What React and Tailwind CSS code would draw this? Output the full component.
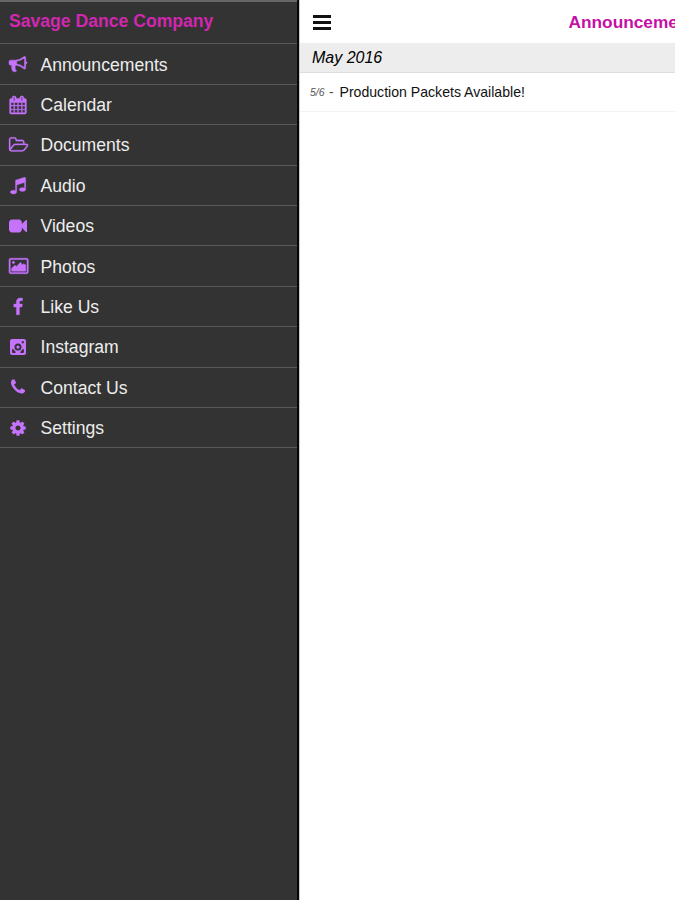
const menuItems = [
  {
    label: 'Announcements',
    weight: 50,
    path: 'M1664 640q53 0 90.5 37.5t37.5 90.5-37.5 90.5-90.5 37.5v384q0 52-38 90t-90 38q-417-347-812-380-58 19-91 66t-31 100.5 40 92.5q-20 33-23 65.5t6 58 33.5 55 48 50 61.5 50.5q-29 58-111.5 83t-168.5 11.5-132-55.5q-7-23-29.5-87.5t-32-94.5-23-89-15-101 3.5-98.5 22-110.5h-122q-66 0-113-47t-47-113v-192q0-66 47-113t113-47h480q435 0 896-384 52 0 90 38t38 90v384zm-128 604v-954q-394 302-768 343v270q377 42 768 341z',
  },
  {
    label: 'Calendar',
    weight: 50,
    path: 'M192 1664h288v-288h-288v288zm352 0h320v-288h-320v288zm-352-352h288v-320h-288v320zm352 0h320v-320h-320v320zm-352-384h288v-288h-288v288zm736 736h320v-288h-320v288zm-384-736h320v-288h-320v288zm768 736h288v-288h-288v288zm-384-352h320v-320h-320v320zm-352-864v-288q0-13-9.5-22.5t-22.5-9.5h-64q-13 0-22.5 9.5t-9.5 22.5v288q0 13 9.5 22.5t22.5 9.5h64q13 0 22.5-9.5t9.5-22.5zm736 864h288v-320h-288v320zm-384-384h320v-288h-320v288zm384 0h288v-288h-288v288zm32-480v-288q0-13-9.5-22.5t-22.5-9.5h-64q-13 0-22.5 9.5t-9.5 22.5v288q0 13 9.5 22.5t22.5 9.5h64q13 0 22.5-9.5t9.5-22.5zm384-64v1280q0 52-38 90t-90 38h-1408q-52 0-90-38t-38-90v-1280q0-52 38-90t90-38h128v-96q0-66 47-113t113-47h64q66 0 113 47t47 113v96h384v-96q0-66 47-113t113-47h64q66 0 113 47t47 113v96h128q52 0 90 38t38 90z',
  },
  {
    label: 'Documents',
    viewBox: '64 0 1920 1792',
    weight: 30,
    path: 'M1845 931q0-35-53-35h-1088q-40 0-85.5 21.5t-71.5 52.5l-294 363q-18 24-18 40 0 35 53 35h1088q40 0 86-22t71-53l294-363q18-22 18-39zm-1141-163h768v-160q0-40-28-68t-68-28h-576q-40 0-68-28t-28-68v-64q0-40-28-68t-68-28h-320q-40 0-68 28t-28 68v853l256-315q44-53 116-87.5t140-34.5zm1269 163q0 62-46 120l-295 363q-43 53-116 87.5t-140 34.5h-1088q-92 0-158-66t-66-158v-960q0-92 66-158t158-66h320q92 0 158 66t66 158v32h544q92 0 158 66t66 158v160h192q54 0 99 24.5t67 70.5q15 32 15 68z',
  },
  {
    label: 'Audio',
    weight: 30,
    path: 'M1664 224v1120q0 50-34 89t-86 60.5-103.5 32-96.5 10.5-96.5-10.5-103.5-32-86-60.5-34-89 34-89 86-60.5 103.5-32 96.5-10.5q105 0 192 39v-537l-768 237v709q0 50-34 89t-86 60.5-103.5 32-96.5 10.5-96.5-10.5-103.5-32-86-60.5-34-89 34-89 86-60.5 103.5-32 96.5-10.5q105 0 192 39v-967q0-31 19-56.5t49-35.5l832-256q12-4 28-4 40 0 68 28t28 68z',
  },
  {
    label: 'Videos',
    path: 'M1792 352v1088q0 42-39 59-13 5-25 5-27 0-45-19l-403-403v166q0 119-84.5 203.5t-203.5 84.5h-704q-119 0-203.5-84.5t-84.5-203.5v-704q0-119 84.5-203.5t203.5-84.5h704q119 0 203.5 84.5t84.5 203.5v165l403-402q18-19 45-19 12 0 25 5 39 17 39 59z',
  },
  {
    label: 'Photos',
    viewBox: '-64 0 1920 1792',
    weight: 50,
    path: 'M500 540q0 50-35 85t-85 35-85-35-35-85 35-85 85-35 85 35 35 85zm1100 260v608h-1408v-272l320-320 160 120 412-412 180 276 130-120zm96-544h-1600q-13 0-22.5 9.5t-9.5 22.5v1216q0 13 9.5 22.5t22.5 9.5h1600q13 0 22.5-9.5t9.5-22.5v-1216q0-13-9.5-22.5t-22.5-9.5zm160 32v1216q0 66-47 113t-113 47h-1600q-66 0-113-47t-47-113v-1216q0-66 47-113t113-47h1600q66 0 113 47t47 113z',
  },
  {
    label: 'Like Us',
    weight: 40,
    path: 'M1343 12v264h-157q-86 0-116 36t-30 108v189h293l-39 296h-254v759h-306v-759h-255v-296h255v-218q0-186 104-288.5t277-102.5q147 0 228 12z',
  },
  {
    label: 'Instagram',
    // camera body, then the cut-outs: lens ring, flash and the two lower corners
    path: 'M300 100h1192a200 200 0 0 1 200 200v1192a200 200 0 0 1-200 200h-1192a200 200 0 0 1-200-200v-1192a200 200 0 0 1 200-200zM896 550a350 350 0 1 0 0 700 350 350 0 1 0 0-700zM896 740a160 160 0 1 1 0 320 160 160 0 1 1 0-320zM1270 320h210v210h-210zM310 1130h120l220 250v110h-280l-60-60zM1482 1130h-120l-220 250v110h280l60-60z',
  },
  {
    label: 'Contact Us',
    path: 'M1600 1240q0 27-10 70.5t-21 68.5q-21 50-122 106-94 51-186 51-27 0-53-3.5t-57.5-12.5-47-14.5-55.5-20.5-49-18q-98-35-175-83-127-79-264-216t-216-264q-48-77-83-175-3-9-18-49t-20.5-55.5-14.5-47-12.5-57.5-3.5-53q0-92 51-186 56-101 106-122 25-11 68.5-21t70.5-10q14 0 21 3 18 6 53 76 11 19 30 54t35 63.5 31 53.5q3 4 17.5 25t21.5 35.5 7 28.5q0 20-28.5 50t-62 55-62 53-28.5 46q0 9 5 22.5t8.5 20.5 14 24 11.5 19q76 137 174 235t235 174q2 1 19 11.5t24 14 20.5 8.5 22.5 5q18 0 46-28.5t53-62 55-62 50-28.5q14 0 28.5 7t35.5 21.5 25 17.5q25 15 53.5 31t63.5 35 54 30q70 35 76 53 3 7 3 21z',
  },
  {
    label: 'Settings',
    path: 'M1152 896q0-106-75-181t-181-75-181 75-75 181 75 181 181 75 181-75 75-181zm512-109v222q0 12-8 23t-20 13l-185 28q-19 54-39 91 35 50 107 138 10 12 10 25t-9 23q-27 37-99 108t-94 71q-12 0-26-9l-138-108q-44 23-91 38-16 136-29 186-7 28-36 28h-222q-14 0-24.5-8.5t-11.5-21.5l-28-184q-49-16-90-37l-141 107q-10 9-25 9-14 0-25-11-126-114-165-168-7-10-7-23 0-12 8-23 15-21 51-66.5t54-70.5q-27-50-41-99l-183-27q-13-2-21-12.5t-8-23.5v-222q0-12 8-23t19-13l186-28q14-46 39-92-40-57-107-138-10-12-10-24 0-10 9-23 26-36 98.5-107.5t94.5-71.5q13 0 26 10l138 107q44-23 91-38 16-136 29-186 7-28 36-28h222q14 0 24.5 8.5t11.5 21.5l28 184q49 16 90 37l142-107q9-9 24-9 13 0 25 10 129 119 165 170 7 8 7 22 0 12-8 23-15 21-51 66.5t-54 70.5q26 50 41 98l183 28q13 2 21 12.5t8 23.5z',
  },
]

function MenuItem({ label, path, viewBox = '0 0 1792 1792', weight = 0 }) {
  return (
    <li className="h-[40.4px] border-b border-[#595959]">
      <a href="#" className="flex h-full items-center pl-[9px] pt-[1.4px] text-[17.6px] text-[#ededed]">
        <span className="w-[31.5px]">
          <svg
            viewBox={viewBox}
            className="-mt-px h-[18px] w-auto overflow-visible fill-[#c473fa] stroke-[#c473fa]"
            strokeWidth={weight}
            aria-hidden="true"
          >
            <path d={path} fillRule="evenodd" />
          </svg>
        </span>
        <span>{label}</span>
      </a>
    </li>
  )
}

function Sidebar() {
  return (
    <aside className="w-[299px] shrink-0 border-r-2 border-[#080808] bg-[#333333]">
      <h1 className="h-[44.4px] border-t-2 border-b border-t-[#666666] border-b-[#595959] pl-[9px] text-[17.6px] leading-[38px] font-bold text-[#d127b0]">
        Savage Dance Company
      </h1>
      <nav>
        <ul>
          {menuItems.map((item) => (
            <MenuItem key={item.label} {...item} />
          ))}
        </ul>
      </nav>
    </aside>
  )
}

export default function App() {
  return (
    <div className="flex h-[900px] w-[675px] overflow-hidden bg-white font-['Liberation_Sans',Arial,sans-serif]">
      <Sidebar />
      <main className="min-w-0 flex-1 overflow-hidden border-l border-[#c8c8c8]">
        <header className="flex h-[43px] items-center pl-[13px]">
          <button className="flex w-[18px] shrink-0 flex-col gap-[3px] pt-[2px]" aria-label="Menu">
            <span className="h-[3px] w-full bg-[#111111]" />
            <span className="h-[3px] w-full bg-[#111111]" />
            <span className="h-[3px] w-full bg-[#111111]" />
          </button>
          <h2 className="ml-[237.5px] pt-[3px] text-[17.3px] font-bold whitespace-nowrap text-[#c60fa5]">
            Announcements
          </h2>
        </header>
        <h3 className="h-[30px] border-b border-[#dddddd] bg-[#ededed] pl-3 text-base leading-[30px] text-black italic">
          May 2016
        </h3>
        <div className="flex h-[39px] items-center border-b border-[#f2f2f2] pt-[2px] pl-[10px] text-[14.1px] whitespace-nowrap text-[#111111]">
          <span className="w-[19px] text-[10.5px] text-[#555555] italic">5/6</span>
          <span className="w-[10.5px] text-[#555555]">-</span>
          <span>Production Packets Available!</span>
        </div>
      </main>
    </div>
  )
}
